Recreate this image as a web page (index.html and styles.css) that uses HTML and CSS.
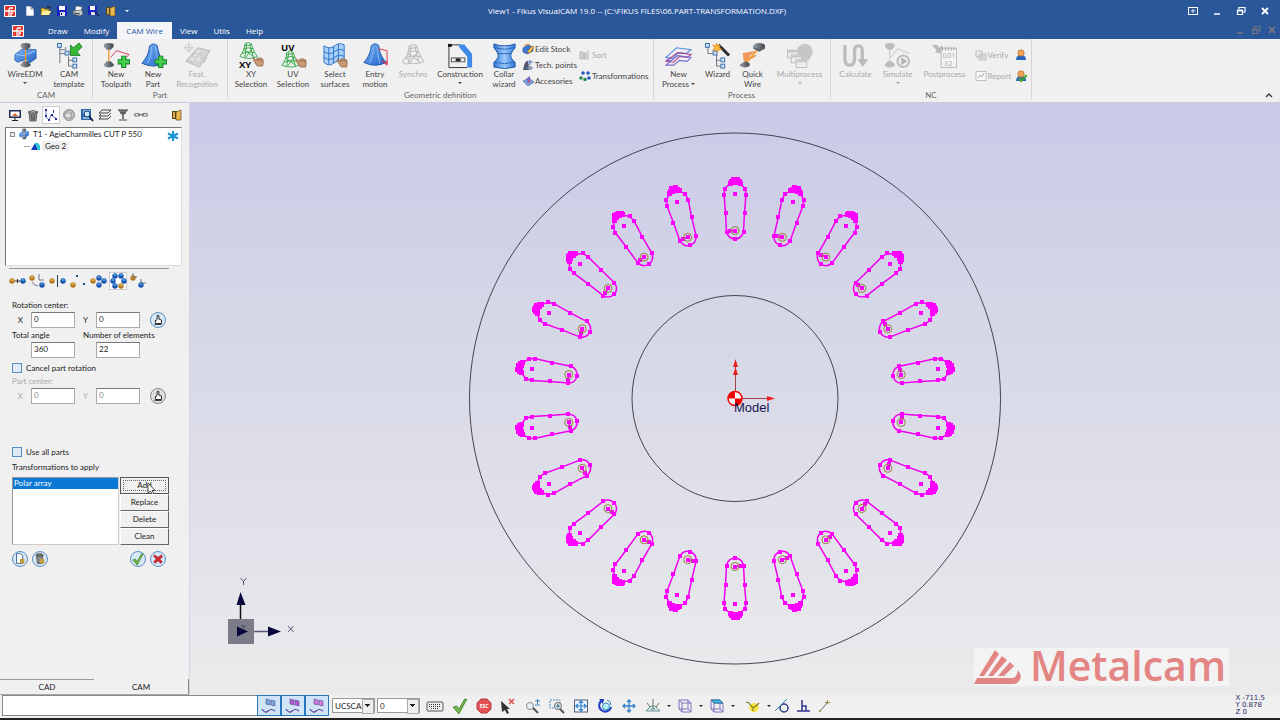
FILE: index.html
```html
<!DOCTYPE html>
<html lang="en">
<head>
<meta charset="utf-8">
<title>View1 - Fikus VisualCAM 19.0</title>
<link rel="stylesheet" href="styles.css">
</head>
<body>
<svg class="sprite" aria-hidden="true">
  <defs>
    <linearGradient id="blue" x1="0" x2="1" y1="0" y2="1"><stop offset="0" stop-color="#7db4f5"/><stop offset="1" stop-color="#1f63c8"/></linearGradient>
    <linearGradient id="steel" x1="0" x2="1"><stop offset="0" stop-color="#9aa0a8"/><stop offset="1" stop-color="#3f444b"/></linearGradient>
    <linearGradient id="waist" x1="0" x2="1"><stop offset="0" stop-color="#2f75d6"/><stop offset=".5" stop-color="#9cc9fb"/><stop offset="1" stop-color="#2f75d6"/></linearGradient>
  </defs>
  <symbol id="logo" viewBox="0 0 12 12"><rect width="12" height="12" rx="1" fill="#fff"/><rect x="1" y="1" width="10" height="10" fill="#e5352c"/><path d="M1 6h10M5 11V4.500q0-1.500 1.500-1.500H9M7 11V8h2" fill="none" stroke="#fff" stroke-width="1.300"/></symbol>
  <symbol id="hand" viewBox="0 0 12 12"><path d="M1 2.500 4 5 4.500 3l1.200-.5L7 3l1-.8 1.300 1 1.200.3.800 3-.8 4.500H5L3 8 .5 4z" fill="#c99a74" stroke="#80583b" stroke-width=".7"/><path d="M6 3.500v2M8 3.500v2M9.800 4v2" stroke="#80583b" stroke-width=".6"/></symbol>
  <symbol id="plus" viewBox="0 0 12 12"><path d="M4 .5h4V4h3.500v4H8v3.500H4V8H.5V4H4z" fill="#43d04b" stroke="#16852a"/></symbol>
  <symbol id="wire" viewBox="0 0 28 28"><path d="M3 13l8-6 14 1v9l-7 5-3-4-9 3-3-2z" fill="url(#blue)" stroke="#1a4f9e" stroke-width=".7"/><path d="M4 13l9 1 11-5M14 13v6" fill="none" stroke="#b9d8ff" stroke-width=".8"/><path d="M14 6v16" stroke="#f79a2c" stroke-width="1.300"/><path d="M9 2q5-2 10 0v3l-3 3h-4L9 5z" fill="url(#steel)"/><path d="M9 25q5 3 10 0v-2l-3-3h-4l-3 3z" fill="url(#steel)"/></symbol>
  <symbol id="template" viewBox="0 0 28 28"><path d="M4 5v17M4 8h6v-3M4 12h7M13 15v10h5M13 19h6" fill="none" stroke="#6b7480"/><g fill="#cfe5fb" stroke="#3a6ca8"><rect x="1.500" y="1.500" width="4" height="4"/><rect x="9.500" y="9.500" width="4" height="4"/><rect x="17.500" y="16.500" width="4" height="4"/><rect x="17.500" y="23" width="4" height="4"/></g><path d="m15 3 3 3 6-5 3 4-5 5 3 4H15z" fill="#37b834" stroke="#187321" stroke-width=".8"/></symbol>
  <symbol id="toolpath" viewBox="0 0 28 28"><path d="M6 7v15" stroke="#f79a2c" stroke-width="1.400"/><path d="M8 16 14 9l13 4-4 4" fill="none" stroke="#df3c63"/><path d="M1 2q5-2 10 0v3L8 8H4L1 5z" fill="url(#steel)"/><path d="M1 25q5 3 10 0v-2l-3-3H4l-3 3z" fill="url(#steel)"/><use href="#plus" x="15" y="14" width="13" height="13"/></symbol>
  <symbol id="bell" viewBox="0 0 28 28"><path d="M10 4Q14 0 18 4c1 8 3 12 8 18q-12 6-24 0C7 16 9 12 10 4z" fill="url(#blue)" stroke="#1b57ae"/><path d="M12 5c0 7-1 12-4 17M16 5l3 18" stroke="#89bdf8" fill="none"/></symbol>
  <symbol id="part" viewBox="0 0 28 28"><use href="#bell" width="28" height="28"/><use href="#plus" x="15" y="14" width="13" height="13"/></symbol>
  <symbol id="feature" viewBox="0 0 28 28"><path d="M2 20 14 6l13 3-11 17z" fill="#d2d2d2" stroke="#b9b9b9"/><path d="m6 18 9-10 8 2-9 12z" fill="#e2e2e2"/><g fill="none" stroke="#b9b9b9"><ellipse cx="12" cy="14" rx="3" ry="2"/><ellipse cx="18" cy="12" rx="2" ry="1.500"/><path d="m10 18 4 2M16 17l3-2M20 22l4-6"/><circle cx="5" cy="6" r="3.500" stroke-dasharray="2 1"/><path d="M5 1v10M0 6h10" stroke-dasharray="2 1"/></g></symbol>
  <symbol id="mesh" viewBox="0 0 20 18"><path d="M6 2q4-3 7 0c1 5 3 9 6 13q-9 4-18 0C4 11 6 7 6 2zM5 7q5-2 9 0M3 12q6-3 13-1M8 2 6 16M11 2l4 14M6 4l7-1M5 8l10 7M14 6 7 16" fill="none" stroke="currentColor" stroke-width=".9"/></symbol>
  <symbol id="surface" viewBox="0 0 28 28"><path d="M2 4q6 4 11 0t10-1v18q-6-3-11 1T2 21z" fill="#a8d0fa"/><path d="M2 4q6 4 11 0t10-1v18q-6-3-11 1T2 21zM7 6v17M12 4v18M17 2v18M2 10q6 4 11 0t10-1M2 16q6 4 11 0t10-1" fill="none" stroke="#2e72c5"/><use href="#hand" x="15" y="15" width="12" height="12"/></symbol>
  <symbol id="entry" viewBox="0 0 28 28"><use href="#bell" width="27" height="27"/><path d="m17 7 9 2v14l-6-4M22 21l4 3v-5" fill="none" stroke="#e0344c"/></symbol>
  <symbol id="synchro" viewBox="0 0 28 28"><use href="#mesh" x="2" y="1" width="24" height="24" color="#bcbcbc"/><circle cx="6" cy="20" r="3" fill="#eee" stroke="#bbb"/></symbol>
  <symbol id="construct" viewBox="0 0 28 28"><path d="M2 4v22.500h19M2 3h12" fill="none" stroke="#333"/><path d="M12 2.500h6l8 10v14h-5V15l-8-9z" fill="#3f8ae6"/><path d="M1 2h4v3H1z" fill="#111"/><rect x="4.500" y="16.500" width="14" height="4" fill="#eee" stroke="#555"/><path d="M9 17h5v3H9z" fill="#222"/></symbol>
  <symbol id="collar" viewBox="0 0 28 28"><path d="M3 2q11 4 22 0v4c-6 7-6 10 0 15v5q-11 3-22 0v-5c6-5 6-8 0-15z" fill="url(#waist)" stroke="#1d57aa"/><path d="M4 6q10 3 20 0M7 12h14M4 21q10 3 20 0" fill="none" stroke="#2d6ab8"/></symbol>
  <symbol id="stock" viewBox="0 0 12 12"><path d="m1 5 5-3 5 2v4l-6 3-4-2z" fill="#3b78d7" stroke="#23448a" stroke-width=".6"/><path d="m5 9 5-6 2 1-4 6z" fill="#f5c750" stroke="#8e5a25" stroke-width=".6"/><path d="m2 3 3-2 3 1" stroke="#e88a2a" fill="none"/></symbol>
  <symbol id="points" viewBox="0 0 12 12"><path d="M2 7q1-5 4-5l1 6 1 3H1z" fill="#4b5668"/><path d="M8 1v5M6 3h5M3 9h8" stroke="#5b81c0" stroke-width="1.200"/><circle cx="8" cy="9" r="2" fill="#8d99ac"/></symbol>
  <symbol id="accessory" viewBox="0 0 12 12"><path d="m1 6 6-3 5 4-6 4z" fill="#7aa4e6" stroke="#385d9c" stroke-width=".6"/><path d="m5 3 3-2v6L5 8z" fill="#7464c8"/><path d="m5 8 3-3 1 2z" fill="#e04d62"/></symbol>
  <symbol id="sort" viewBox="0 0 12 12"><path d="M1 3h3v7H1zM5 4h2v6H5zM9 1v10" fill="#d5d5d5" stroke="#b4b4b4"/></symbol>
  <symbol id="transform" viewBox="0 0 12 12"><g fill="#2456c4"><circle cx="4" cy="3" r="1.800"/><circle cx="9" cy="3" r="1.800"/><circle cx="10" cy="8" r="1.800"/></g><g fill="#258b4c"><circle cx="2" cy="8" r="1.800"/><circle cx="6" cy="9.500" r="1.800"/></g></symbol>
  <symbol id="process" viewBox="0 0 28 28"><g fill="none" stroke-width="1.200"><path d="m1 16 11-10 15 2-5 4-8-1-6 6zM1 19l6 0" stroke="#5b8ee0"/><path d="m1 20 12-9 14 2-4 3-8-1-6 6z" stroke="#b04596"/><path d="m1 24 12-10 14 2-4 4-8-1-6 5z" stroke="#7a6dcf"/></g></symbol>
  <symbol id="wizard" viewBox="0 0 28 28"><path d="M4 5v7h7M13 13v12h5M13 19h5" fill="none" stroke="#6b7480"/><g fill="#cfe5fb" stroke="#3a6ca8"><rect x="1.500" y="1.500" width="4" height="4"/><rect x="9.500" y="9.500" width="4" height="4"/><rect x="17.500" y="16.500" width="4" height="4"/><rect x="17.500" y="23" width="4" height="4"/></g><path d="m15 3 11 11" stroke="#2d2d35" stroke-width="3"/><path d="m13 1 1 3 3-1-1 3 3 2-4 0-1 3-1-3-4 1 2-3-2-3 3 1z" fill="#fcbc2e" stroke="#d8781b" stroke-width=".6"/></symbol>
  <symbol id="quick" viewBox="0 0 28 28"><path d="m4 12 12-2-8 6 10-2-13 8" fill="#f2995b" stroke="#dc6d31" stroke-width=".6"/><path d="M21 6 7 22" stroke="#f7a53b" stroke-width="2"/><path d="M15 4v3l6 3 6-3V4" fill="#59616b"/><ellipse cx="21" cy="4" rx="6" ry="3" fill="url(#steel)"/><path d="M1 23v2q5 3 10 0v-3l-4-2z" fill="url(#steel)"/></symbol>
  <symbol id="multi" viewBox="0 0 28 28"><path d="M12 6q8-8 14-1l2 6-4 8H14z" fill="#c6c6c6"/><g fill="#ededed" stroke="#bdbdbd"><rect x="1.500" y="8.500" width="11" height="8"/><rect x="5.500" y="13.500" width="11" height="8"/><rect x="10.500" y="18.500" width="11" height="8"/></g><path d="M2 9h10v2H2zM6 14h10v2H6zM11 19h10v2H11z" fill="#c6c6c6"/></symbol>
  <symbol id="calculate" viewBox="0 0 28 28"><path d="M3 3v14q0 7 5 7t5-7V9q0-5 4-5t4 5v12" fill="none" stroke="#bdbdbd" stroke-width="3.500"/><path d="M16 18h11l-5.500 8z" fill="#b9b9b9"/></symbol>
  <symbol id="simulate" viewBox="0 0 28 28"><path d="M6 7v15" stroke="#c3c3c3"/><path d="M7 16 14 7l13 5" fill="none" stroke="#c3c3c3"/><path d="M1 2q5-2 10 0v3L8 8H4L1 5zM1 25q5 3 10 0v-2l-3-3H4l-3 3z" fill="#bcbcbc"/><circle cx="20" cy="20" r="6" fill="#eee" stroke="#bcbcbc" stroke-width="2"/><path d="m18 16 6 4-6 4z" fill="#b2b2b2"/></symbol>
  <symbol id="post" viewBox="0 0 28 28"><path d="m1 3 5 0 3 3 2-3 2 9-9-1 2-2z" fill="#b9b9b9"/><rect x="10.500" y="6.500" width="16" height="20" fill="#f3f3f3" stroke="#bbb"/><path d="M12 5v4M15 5v4M18 5v4M21 5v4M24 5v4" stroke="#aaa"/></symbol>
  <symbol id="verify" viewBox="0 0 12 12"><path d="M1 2h6v6H1zM4 5h7v6H4zM5 7h5M5 9h5" fill="#eee" stroke="#bdbdbd"/></symbol>
  <symbol id="report" viewBox="0 0 12 12"><rect x="1" y="1.500" width="10" height="9" fill="#f8f8f8" stroke="#bdbdbd"/><path d="m3 8 2-3 2 2 2-4" fill="none" stroke="#aaa"/></symbol>
  <symbol id="person" viewBox="0 0 12 12"><path d="M1 11q0-5 5-5t5 5z" fill="#2766bd"/><circle cx="6" cy="4" r="3.200" fill="#f2a456" stroke="#a96021" stroke-width=".6"/></symbol>
  <symbol id="person-ok" viewBox="0 0 12 12"><use href="#person" width="12" height="12"/><path d="m4 8 2 3 6-6" fill="none" stroke="#41a431" stroke-width="2"/></symbol>
  <symbol id="page" viewBox="0 0 12 12"><path d="M2 1h5l3 3v7H2z" fill="#fff" stroke="#35538b" stroke-width=".6"/><path d="M7 1v3h3" fill="none" stroke="#555" stroke-width=".8"/></symbol>
  <symbol id="folder" viewBox="0 0 12 12"><path d="M1 10V3h3l1 1h4v2h2l-2 4z" fill="#e8bd3e" stroke="#5a4708" stroke-width=".7"/><path d="M3 6h8l-2 4H1z" fill="#fff1a1"/><path d="M7 2q3-1 4 1" stroke="#111" fill="none"/></symbol>
  <symbol id="disk" viewBox="0 0 12 12"><path d="M1 1h10v10H1z" fill="#1c23c0"/><path d="M3 1h6v4H3z" fill="#fff"/><path d="M4 7h5v4H4z" fill="#dfe3ee"/><path d="M5 8h1v2H5z" fill="#111"/></symbol>
  <symbol id="disk-as" viewBox="0 0 12 12"><path d="M0 1h9v9H0z" fill="#1c23c0"/><path d="M2 1h5v4H2z" fill="#fff"/><path d="M3 7h4v3H3z" fill="#dfe3ee"/><path d="m7 7 4 4" stroke="#1b2352" stroke-width="1.400"/></symbol>
  <symbol id="printer" viewBox="0 0 12 12"><path d="m4 1 6 1-1 5H3z" fill="#fff" stroke="#666" stroke-width=".5"/><path d="m1 6 9-1 1 4-3 2-7-2z" fill="#c6cbd2" stroke="#444" stroke-width=".6"/><path d="m2 8 6 1" stroke="#333"/></symbol>
  <symbol id="door" viewBox="0 0 12 12"><path d="M2 2h5v8H2z" fill="#5b461c"/><path d="m6 3 5-2v10H6z" fill="#eabb4c" stroke="#5b461c" stroke-width=".7"/><path d="M3 3h2v6H3z" fill="#d6aa4c"/></symbol>
  <symbol id="screen" viewBox="0 0 14 14"><path d="M1 2h12v8H1z" fill="#222c55"/><path d="M2.500 3.500h9v5h-9z" fill="#fff"/><path d="m4 8 3-3 3 3z" fill="#d9622e"/><path d="M7 9v4M4 12.500h6" stroke="#222"/></symbol>
  <symbol id="bin" viewBox="0 0 14 14"><path d="m3 4 1 9h6l1-9z" fill="#999" stroke="#444" stroke-width=".8"/><path d="M2 4q5-3 10 0l-3 1H4zM5 6l1 6M7 6v6M9 6l-1 6" fill="#bbb" stroke="#444" stroke-width=".8"/></symbol>
  <symbol id="path" viewBox="0 0 14 14"><path d="M2 1v8l3 3 2-5 3 2 3 2" fill="none" stroke="#3950b0" stroke-width=".8"/><path d="M1 1h2v2H1zM1 7h2v2H1zM4 11h2v2H4zM7 6h2v2H7zM11 10h2v2h-2zM9 2h1v3H9z" fill="#242e91"/></symbol>
  <symbol id="cube-gray" viewBox="0 0 14 14"><circle cx="7" cy="7" r="5.500" fill="#bbb" stroke="#999"/><path d="M3 5h6v5H3zM3 5l2-2h6L9 5M9 10l3-2V4" fill="#ddd" stroke="#888" stroke-width=".7"/></symbol>
  <symbol id="find" viewBox="0 0 14 14"><path d="M1 1h10v11H1z" fill="#2d68ae"/><path d="M3 3h7M3 10h6M3 5h2" stroke="#fff"/><circle cx="7" cy="6" r="3" fill="#c9e9fb" stroke="#123b75"/><path d="m9 8 4 5" stroke="#172b51" stroke-width="2"/></symbol>
  <symbol id="layers" viewBox="0 0 14 14"><path d="M1 5 4 2h9l-3 3zM1 8l2-2M1 8h9l3-3M1 11l2-2M1 11h9l3-3" fill="none" stroke="#444"/></symbol>
  <symbol id="funnel" viewBox="0 0 14 14"><path d="M2 2h10L8 7v4H6V7z" fill="#777"/><path d="M2 2h10M4 5h6M3 12h8" stroke="#444"/></symbol>
  <symbol id="chain" viewBox="0 0 14 14"><g fill="none" stroke="#777" stroke-width="1.200"><rect x=".6" y="5.500" width="5" height="2.500" rx="1"/><rect x="8.400" y="5.500" width="5" height="2.500" rx="1"/><path d="M4 6.700h6"/></g></symbol>
  <symbol id="gold" viewBox="0 0 6 6"><circle cx="3" cy="3" r="2.700" fill="#b67a20"/><path d="m1 2 2-1 2 1-2 1z" fill="#eabf68"/></symbol>
  <symbol id="azure" viewBox="0 0 6 6"><circle cx="3" cy="3" r="2.700" fill="#1953ad"/><path d="m1 2 2-1 2 1-2 1z" fill="#54b2f2"/></symbol>
  <symbol id="t-move" viewBox="0 0 18 18"><use href="#gold" x="0" y="6" width="6" height="6"/><use href="#azure" x="11" y="6" width="6" height="6"/><path d="M6 9h5M8.500 7v4" stroke="#333"/></symbol>
  <symbol id="t-rotate" viewBox="0 0 18 18"><use href="#gold" x="0" y="3" width="6" height="6"/><use href="#azure" x="10" y="10" width="6" height="6"/><path d="M3 10q2 4 6 4M10 2v6h5" fill="none" stroke="#557" stroke-width=".8"/></symbol>
  <symbol id="t-mirror" viewBox="0 0 18 18"><use href="#gold" x="0" y="6" width="6" height="6"/><use href="#azure" x="11" y="6" width="6" height="6"/><path d="M8.500 3v12" stroke="#263a62"/></symbol>
  <symbol id="t-scale" viewBox="0 0 18 18"><use href="#gold" x="1" y="10" width="6" height="6"/><path d="M7 3h2v2H7zM14 11h2v2h-2z" fill="#224b76"/></symbol>
  <symbol id="t-grid" viewBox="0 0 18 18"><use href="#gold" x="1" y="6" width="6" height="6"/><use href="#azure" x="7" y="3" width="6" height="6"/><use href="#azure" x="7" y="10" width="6" height="6"/><use href="#azure" x="12" y="6" width="6" height="6"/></symbol>
  <symbol id="t-polar" viewBox="0 0 18 18"><use href="#azure" x="3" y="1" width="6" height="6"/><use href="#azure" x="9" y="1" width="6" height="6"/><use href="#azure" x="1" y="6" width="6" height="6"/><use href="#azure" x="12" y="6" width="6" height="6"/><use href="#azure" x="3" y="11" width="6" height="6"/><use href="#gold" x="9" y="11" width="6" height="6"/></symbol>
  <symbol id="t-copy" viewBox="0 0 18 18"><use href="#gold" x="1" y="3" width="6" height="6"/><use href="#azure" x="9" y="10" width="6" height="6"/><path d="M4 1v4h4M12 7v4h5" fill="none" stroke="#456" stroke-width=".8"/></symbol>
  <symbol id="pick" viewBox="0 0 16 16"><path d="m5 11 0-2 2-2V3q1-1 2 0v4l3 1v4H5zM6 8l-1 2M4 13h8" fill="#fff" stroke="#222" stroke-width="1.100"/></symbol>
  <symbol id="check" viewBox="0 0 16 16"><path d="m2 9 3-1 2 3 5-9 2 0-7 13z" fill="#76b944" stroke="#367724" stroke-width=".7"/></symbol>
  <symbol id="cross" viewBox="0 0 16 16"><path d="m4 3 4 3 4-3 1 3-3 2 3 3-2 2-3-3-3 3-2-2 3-3-3-3z" fill="#d82532" stroke="#841824" stroke-width=".6"/></symbol>
  <symbol id="new-doc" viewBox="0 0 16 16"><path d="M4 2h5l2 2v9H4z" fill="#fff" stroke="#335b89"/><path d="M8 8h5v5H8z" fill="#c39a35"/></symbol>
  <symbol id="bin-lock" viewBox="0 0 16 16"><path d="M4 5h7v8H5zM3 4h9l-2-2H5z" fill="#8b8c86" stroke="#54554f"/><path d="M8 8h5v5H8z" fill="#c9a13d"/></symbol>
  <symbol id="geo" viewBox="0 0 10 10"><path d="M0 9 4 2l3 7z" fill="#123ac0"/><path d="M4 2h3q3 3 2 7H7z" fill="#21c8d7"/></symbol>
  <symbol id="filter-view" viewBox="0 0 16 16"><path d="m5 1 4 1v5L5 6zM10 2l4 1v5l-4-1z" fill="currentColor" stroke="#574e8b" stroke-width=".6"/><path d="M1 11q3 5 6 2t7 0" fill="none" stroke="#51409a" stroke-width="1.200"/></symbol>
  <symbol id="keyboard" viewBox="0 0 18 16"><rect x="1" y="4" width="16" height="9" rx="1" fill="#eee" stroke="#555"/><path d="M3 6.500h12M3 8.500h12M5 10.500h8" stroke="#333" stroke-dasharray="1 1"/></symbol>
  <symbol id="unselect" viewBox="0 0 16 16"><path d="m2 3 9 8H8l2 4-2 1-2-4-3 2z" fill="#333"/><path d="m10 1 5 5M15 1l-5 5" stroke="#e04d4d" stroke-width="1.500"/></symbol>
  <symbol id="zoom-pm" viewBox="0 0 16 16"><circle cx="5" cy="8" r="3.500" fill="#e9f3f9" stroke="#888"/><path d="m8 10 5 5" stroke="#555" stroke-width="2"/><path d="M10 3h5M12.500 1v5M10 7h5" stroke="#3786c7"/></symbol>
  <symbol id="zoom-win" viewBox="0 0 16 16"><path d="M1 2h10v8H1z" fill="none" stroke="#4b8bbf" stroke-dasharray="2 1"/><circle cx="9" cy="8" r="3.500" fill="#e2f0f8" stroke="#666"/><path d="m11 11 4 4" stroke="#555" stroke-width="2"/><path d="M7 8h4M9 6v4" stroke="#367"/></symbol>
  <symbol id="fit" viewBox="0 0 16 16"><rect x="1.500" y="2" width="13" height="12" fill="#eef7ff" stroke="#555b76"/><path d="M8 2v12M2 8h12M6 5l2-2 2 2M6 11l2 2 2-2M5 6 3 8l2 2M11 6l2 2-2 2" fill="none" stroke="#2d82cf" stroke-width="1.200"/></symbol>
  <symbol id="orbit" viewBox="0 0 16 16"><path d="M6 2a6 6 0 1 0 8 7" fill="none" stroke="#233ac2" stroke-width="2"/><circle cx="9" cy="8.500" r="3.500" fill="#b6eef5" stroke="#3187b4"/><path d="m2 1 5 0-1 5z" fill="#233ac2"/><path d="M10 2q4 1 4 5" fill="none" stroke="#2785bc"/></symbol>
  <symbol id="pan" viewBox="0 0 16 16"><path d="M8 2v12M2 8h12M6 4l2-2 2 2M6 12l2 2 2-2M4 6 2 8l2 2M12 6l2 2-2 2" fill="none" stroke="#3182c7" stroke-width="1.300"/></symbol>
  <symbol id="plane" viewBox="0 0 16 16"><path d="m1 13 5-5h4l5 5z" fill="#c9ecea" stroke="#6d9397"/><path d="M8 1v9M2 5l3 4M14 5l-3 4M6 11h4" stroke="#6d7366"/></symbol>
  <symbol id="wirecube" viewBox="0 0 16 16"><path d="M2 2h9l3 3v9H5l-3-3zM2 2l3 3h9M5 5v9M2 11h9V2M11 11l3 3" fill="none" stroke="#7560b6" stroke-width=".9"/></symbol>
  <symbol id="topcube" viewBox="0 0 16 16"><use href="#wirecube" width="16" height="16"/><path d="M2 2h9l3 3H5z" fill="#48bfe8" stroke="#226d9b"/></symbol>
  <symbol id="snap" viewBox="0 0 16 16"><path d="M4 9q5-8 10 0-1 5-5 5t-5-5z" fill="#f6e33d"/><path d="m1 4 3 1 3 4h3l4-4M8 9v4" fill="none" stroke="#7a7224" stroke-width="1.100"/></symbol>
  <symbol id="tangent" viewBox="0 0 16 16"><circle cx="10" cy="10" r="4" fill="none" stroke="#2f3b86" stroke-width="1.500"/><path d="M1 13 13 1" stroke="#3586af"/></symbol>
  <symbol id="perp" viewBox="0 0 16 16"><path d="M2 13h13M7 2v11M7 8h4v5" fill="none" stroke="#30348a" stroke-width="1.500"/></symbol>
  <symbol id="endline" viewBox="0 0 16 16"><path d="M4 13 12 4" stroke="#666"/><path d="M3 12h2v2H3zM11 2h1v4h-1zM9 4h5v1H9z" fill="#9d9551"/></symbol>
  <symbol id="restore" viewBox="0 0 10 10"><path d="M3 3V1.500h6V6H7M1.500 4h5v4.500h-5zM1.500 5h5" fill="none" stroke="currentColor" stroke-width="1.200"/></symbol>
  <symbol id="minimise" viewBox="0 0 10 10"><path d="M2 8h6" stroke="currentColor" stroke-width="1.500"/></symbol>
  <symbol id="close" viewBox="0 0 10 10"><path d="m2 2 6 6M8 2 2 8" stroke="currentColor" stroke-width="1.800"/></symbol>
  <symbol id="ribbon-toggle" viewBox="0 0 10 10"><rect x=".5" y="1.500" width="9" height="7" fill="none" stroke="currentColor"/><path d="M5 7V4M3 5.500 5 3.500l2 2" fill="none" stroke="currentColor"/></symbol>
</svg>

<div class="app">
  <header class="titlebar">
    <div class="quick">
      <svg class="i12"><use href="#logo"/></svg>
      <button class="flat first" aria-label="New"><svg class="i12"><use href="#page"/></svg></button>
      <button class="flat" aria-label="Open"><svg class="i12"><use href="#folder"/></svg></button>
      <button class="flat" aria-label="Save"><svg class="i12"><use href="#disk"/></svg></button>
      <button class="flat" aria-label="Print"><svg class="i12"><use href="#printer"/></svg></button>
      <button class="flat" aria-label="Save as"><svg class="i12"><use href="#disk-as"/></svg></button>
      <button class="flat" aria-label="Exit"><svg class="i12"><use href="#door"/></svg></button>
      <button class="flat more" aria-label="Customise"><span class="caret"></span></button>
    </div>
    <h1>View1 - Fikus VisualCAM 19.0 -- (C:\FIKUS FILES\06.PART-TRANSFORMATION.DXF)</h1>
    <div class="winctl">
      <button class="flat" aria-label="Ribbon display"><svg class="i10"><use href="#ribbon-toggle"/></svg></button>
      <button class="flat" aria-label="Minimise"><svg class="i10"><use href="#minimise"/></svg></button>
      <button class="flat" aria-label="Restore"><svg class="i10"><use href="#restore"/></svg></button>
      <button class="flat" aria-label="Close"><svg class="i10"><use href="#close"/></svg></button>
    </div>
  </header>

  <nav class="tabs">
    <svg class="i12"><use href="#logo"/></svg>
    <button class="tab first">Draw</button>
    <button class="tab">Modify</button>
    <button class="tab active">CAM Wire</button>
    <button class="tab">View</button>
    <button class="tab">Utils</button>
    <button class="tab">Help</button>
    <div class="docctl">
      <button class="flat" aria-label="Minimise view"><svg class="i10"><use href="#minimise"/></svg></button>
      <button class="flat" aria-label="Restore view"><svg class="i10"><use href="#restore"/></svg></button>
      <button class="flat" aria-label="Close view"><svg class="i10"><use href="#close"/></svg></button>
    </div>
  </nav>

  <section class="ribbon">
    <div class="group">
      <div class="tools">
        <button class="tool w46"><svg><use href="#wire"/></svg><span>WireEDM</span><i class="caret"></i></button>
        <button class="tool w42"><svg><use href="#template"/></svg><span>CAM<br>template</span></button>
      </div>
      <h2>CAM</h2>
    </div>
    <div class="group">
      <div class="tools">
        <button class="tool w42"><svg><use href="#toolpath"/></svg><span>New<br>Toolpath</span></button>
        <button class="tool w32"><svg><use href="#part"/></svg><span>New<br>Part</span></button>
        <button class="tool w56" disabled><svg><use href="#feature"/></svg><span>Feat.<br>Recognition</span></button>
      </div>
      <h2>Part</h2>
    </div>
    <div class="group">
      <div class="tools">
        <button class="tool w42"><svg viewBox="0 0 28 28"><use href="#mesh" x="1" y="0" width="20" height="18" color="#26a33b"/><text class="icon-word" x="1" y="27">XY</text><use href="#hand" x="15" y="14" width="12" height="12"/></svg><span>XY<br>Selection</span></button>
        <button class="tool w42"><svg viewBox="0 0 28 28"><use href="#mesh" x="1" y="9" width="20" height="18" color="#26a33b"/><text class="icon-word" x="1" y="9">UV</text><use href="#hand" x="16" y="15" width="12" height="12"/></svg><span>UV<br>Selection</span></button>
        <button class="tool w42"><svg><use href="#surface"/></svg><span>Select<br>surfaces</span></button>
        <button class="tool w38"><svg><use href="#entry"/></svg><span>Entry<br>motion</span></button>
        <button class="tool w38" disabled><svg><use href="#synchro"/></svg><span>Synchro</span></button>
        <button class="tool w56"><svg><use href="#construct"/></svg><span>Construction</span><i class="caret"></i></button>
        <button class="tool w32"><svg><use href="#collar"/></svg><span>Collar<br>wizard</span></button>
        <div class="stack">
          <button class="mini"><svg class="i12"><use href="#stock"/></svg>Edit Stock</button>
          <button class="mini"><svg class="i12"><use href="#points"/></svg>Tech. points</button>
          <button class="mini"><svg class="i12"><use href="#accessory"/></svg>Accesories</button>
        </div>
        <div class="stack two">
          <button class="mini" disabled><svg class="i12"><use href="#sort"/></svg>Sort</button>
          <button class="mini"><svg class="i12"><use href="#transform"/></svg>Transformations</button>
        </div>
      </div>
      <h2>Geometric definition</h2>
    </div>
    <div class="group">
      <div class="tools">
        <button class="tool w46"><svg><use href="#process"/></svg><span>New<br>Process <i class="caret"></i></span></button>
        <button class="tool w32"><svg><use href="#wizard"/></svg><span>Wizard</span></button>
        <button class="tool w38"><svg><use href="#quick"/></svg><span>Quick<br>Wire</span></button>
        <button class="tool w56" disabled><svg><use href="#multi"/></svg><span>Multiprocess</span><i class="caret"></i></button>
      </div>
      <h2>Process</h2>
    </div>
    <div class="group">
      <div class="tools">
        <button class="tool w46" disabled><svg><use href="#calculate"/></svg><span>Calculate</span></button>
        <button class="tool w38" disabled><svg><use href="#simulate"/></svg><span>Simulate</span><i class="caret"></i></button>
        <button class="tool w56" disabled><svg viewBox="0 0 28 28"><use href="#post"/><text class="nc-code" x="12" y="17">G01</text><text class="nc-code" x="14" y="25">X2</text></svg><span>Postprocess</span></button>
        <div class="stack two">
          <button class="mini" disabled><svg class="i12"><use href="#verify"/></svg>Verify</button>
          <button class="mini" disabled><svg class="i12"><use href="#report"/></svg>Report</button>
        </div>
        <div class="stack two">
          <button class="mini" aria-label="Operator"><svg class="i12"><use href="#person"/></svg></button>
          <button class="mini" aria-label="Validated operator"><svg class="i12"><use href="#person-ok"/></svg></button>
        </div>
      </div>
      <h2>NC</h2>
    </div>
    <button class="flat collapse" aria-label="Collapse ribbon"><svg class="i10" viewBox="0 0 10 10"><path d="m2 7 3-3 3 3" fill="none" stroke="#333" stroke-width="1.300"/></svg></button>
  </section>

  <main class="work">
    <aside class="panel">
      <div class="bar">
        <button class="flat" aria-label="Display"><svg class="i14"><use href="#screen"/></svg></button>
        <button class="flat" aria-label="Delete item"><svg class="i14"><use href="#bin"/></svg></button>
        <button class="flat on" aria-label="Toolpaths"><svg class="i14"><use href="#path"/></svg></button>
        <button class="flat" aria-label="Solid" disabled><svg class="i14"><use href="#cube-gray"/></svg></button>
        <button class="flat" aria-label="Find"><svg class="i14"><use href="#find"/></svg></button>
        <button class="flat" aria-label="Layers"><svg class="i14"><use href="#layers"/></svg></button>
        <button class="flat" aria-label="Filter"><svg class="i14"><use href="#funnel"/></svg></button>
        <button class="flat" aria-label="Link"><svg class="i14"><use href="#chain"/></svg></button>
        <button class="flat last" aria-label="Close panel"><svg class="i12"><use href="#door"/></svg></button>
      </div>
      <div class="tree">
        <div class="node"><span class="toggle"></span><svg class="i12"><use href="#wire"/></svg>T1 - AgieCharmilles CUT P 550</div>
        <div class="node child"><span class="branch"></span><svg class="i10"><use href="#geo"/></svg><span class="chosen">Geo 2</span></div>
        <svg class="star" viewBox="0 0 12 12"><path d="M6 1v10M1 3.500l10 5M11 3.500l-10 5" stroke="#1d94d6" stroke-width="2.200"/></svg>
      </div>
      <div class="bar kinds">
        <button class="flat" aria-label="Translate"><svg class="i18"><use href="#t-move"/></svg></button>
        <button class="flat" aria-label="Rotate"><svg class="i18"><use href="#t-rotate"/></svg></button>
        <button class="flat" aria-label="Mirror"><svg class="i18"><use href="#t-mirror"/></svg></button>
        <button class="flat" aria-label="Scale"><svg class="i18"><use href="#t-scale"/></svg></button>
        <button class="flat" aria-label="Grid array"><svg class="i18"><use href="#t-grid"/></svg></button>
        <button class="flat on" aria-label="Polar array"><svg class="i18"><use href="#t-polar"/></svg></button>
        <button class="flat" aria-label="Origin to origin"><svg class="i18"><use href="#t-copy"/></svg></button>
      </div>
      <form class="form">
        <div class="fields">
          <span class="wide">Rotation center:</span>
          <label class="axis" for="rx">X</label><input id="rx" type="text" value="0">
          <label class="axis" for="ry">Y</label><input id="ry" type="text" value="0">
          <button type="button" class="round" aria-label="Pick rotation center"><svg><use href="#pick"/></svg></button>
          <label class="half" for="angle">Total angle</label><label class="rest" for="count">Number of elements</label>
          <input class="c2" id="angle" type="text" value="360"><input class="c4" id="count" type="text" value="22">
        </div>
        <label class="tick"><input type="checkbox">Cancel part rotation</label>
        <div class="fields dim">
          <span class="wide">Part center:</span>
          <label class="axis" for="px">X</label><input id="px" type="text" value="0" disabled>
          <label class="axis" for="py">Y</label><input id="py" type="text" value="0" disabled>
          <button type="button" class="round gray" aria-label="Pick part center"><svg><use href="#pick"/></svg></button>
        </div>
        <label class="tick all"><input type="checkbox">Use all parts</label>
        <label class="caption" for="list">Transformations to apply</label>
        <div class="apply">
          <select class="list" id="list" size="4"><option selected>Polar array</option></select>
          <div class="acts">
            <button type="button" class="push focus">Add<svg class="cursor" viewBox="0 0 10 14"><path d="M1 1v10l2.500-2 2 4 1.500-1-2-3.500h3z" fill="#fff" stroke="#222" stroke-width=".8"/></svg></button>
            <button type="button" class="push">Replace</button>
            <button type="button" class="push">Delete</button>
            <button type="button" class="push">Clean</button>
          </div>
        </div>
        <div class="ends">
          <button type="button" class="round" aria-label="Load"><svg><use href="#new-doc"/></svg></button>
          <button type="button" class="round" aria-label="Discard"><svg><use href="#bin-lock"/></svg></button>
          <button type="button" class="round push-right" aria-label="Accept"><svg><use href="#check"/></svg></button>
          <button type="button" class="round" aria-label="Cancel"><svg><use href="#cross"/></svg></button>
        </div>
      </form>
      <div class="sheets"><button class="sheet">CAD</button><button class="sheet current">CAM</button></div>
    </aside>

    <section class="view">
      <svg class="drawing" viewBox="190 103 1090 592">
        <g fill="none" stroke="#33333f" stroke-width=".9"><circle cx="735" cy="398.500" r="265.500"/><circle cx="735" cy="398.500" r="103"/></g>
        <g id="slots"></g>
        <g class="origin">
          <path d="M735.500 392V362M742 398.500h30" stroke="#a04444"/>
          <path d="m735.500 359 2.500 8h-5zM735.500 367l2.500 8h-5zM775 398.500l-8-2.500v5z" fill="#f02020"/>
          <circle cx="735" cy="398.500" r="7" fill="#fff" stroke="#f00000" stroke-width="1.500"/>
          <path d="M735 398.500v-7a7 7 0 0 0-7 7zM735 398.500v7a7 7 0 0 0 7-7z" fill="#f00000"/>
          <text class="model" x="734" y="412">Model</text>
        </g>
        <g class="triad">
          <rect x="228" y="619" width="26" height="25" fill="#7c7b88"/>
          <path d="M240.500 619v-14" stroke="#111" stroke-width="1.500"/><path d="M254 631.500h16" stroke="#55557a" stroke-width="1.500"/>
          <path d="m240.500 592 5 13h-9zM281 631.500l-13-5v10zM248 631.500l-11-5v10z" fill="#07073d"/>
          <g fill="none" stroke="#34345c" stroke-width=".8"><path d="m240.500 578 3 3.500 3-3.500M243.500 581.500v3.500M288 626l5.500 6M293.500 626l-5.500 6M241 626h4l-4 5"/></g>
        </g>
      </svg>
      <div class="brand">
        <svg viewBox="0 0 48 36"><g fill="#e28583"><path d="M21 1 5 27h5L25 5zM28 7 14 27h5L33 11zM36 13 24 27h6l10-10zM3 29h36q3-1 4-4l1-4q5 7 1 11-2 3-7 3H0z"/></g></svg>
        <span>Metalcam</span>
      </div>
    </section>
  </main>

  <footer class="status">
    <input class="prompt" type="text" aria-label="Command">
    <div class="switches">
      <button class="switch sky" aria-label="Point filter"><svg class="i16"><use href="#filter-view"/></svg></button>
      <button class="switch violet" aria-label="Curve filter"><svg class="i16"><use href="#filter-view"/></svg></button>
      <button class="switch pink" aria-label="Surface filter"><svg class="i16"><use href="#filter-view"/></svg></button>
    </div>
    <span class="drop"><select aria-label="Coordinate system"><option>UCSCAM</option></select></span>
    <span class="drop"><select aria-label="Level"><option>0</option></select></span>
    <div class="icons">
      <button class="flat" aria-label="Keyboard"><svg class="i18"><use href="#keyboard"/></svg></button>
      <button class="flat" aria-label="Confirm"><svg class="i18"><use href="#check"/></svg></button>
      <button class="flat" aria-label="Escape"><svg class="i16" viewBox="0 0 16 16"><path d="M5 1h6l4 4v6l-4 4H5l-4-4V5z" fill="#e35252" stroke="#b53c3c"/><text class="esc-word" x="8" y="10">ESC</text></svg></button>
      <button class="flat" aria-label="Deselect"><svg class="i16"><use href="#unselect"/></svg></button>
    </div>
    <div class="icons zooms">
      <button class="flat" aria-label="Zoom"><svg class="i16"><use href="#zoom-pm"/></svg></button>
      <button class="flat" aria-label="Zoom window"><svg class="i16"><use href="#zoom-win"/></svg></button>
      <button class="flat" aria-label="Fit"><svg class="i16"><use href="#fit"/></svg></button>
      <button class="flat" aria-label="Orbit"><svg class="i16"><use href="#orbit"/></svg></button>
      <button class="flat" aria-label="Pan"><svg class="i16"><use href="#pan"/></svg></button>
      <button class="flat menu" aria-label="Work plane"><svg class="i16"><use href="#plane"/></svg><i class="caret"></i></button>
      <button class="flat menu" aria-label="Wireframe"><svg class="i16"><use href="#wirecube"/></svg><i class="caret"></i></button>
      <button class="flat menu" aria-label="Top view"><svg class="i16"><use href="#topcube"/></svg><i class="caret"></i></button>
    </div>
    <div class="icons snaps">
      <button class="flat menu" aria-label="Snap"><svg class="i16"><use href="#snap"/></svg><i class="caret"></i></button>
      <button class="flat" aria-label="Tangent"><svg class="i16"><use href="#tangent"/></svg></button>
      <button class="flat" aria-label="Perpendicular"><svg class="i16"><use href="#perp"/></svg></button>
      <button class="flat" aria-label="End point"><svg class="i16"><use href="#endline"/></svg></button>
    </div>
    <output class="coords">X -711.5<br>Y 0.878<br>Z 0</output>
  </footer>
</div>
<script src="script.js"></script>
</body>
</html>
```

FILE: styles.css
```css
* { box-sizing: border-box; }
body { margin: 0; font: 8px/10px Lato, "Open Sans", sans-serif; color: #222; }
button, input, select { font: inherit; color: inherit; margin: 0; padding: 0; border: 0; border-radius: 0; }
button { background: none; }
h1, h2 { margin: 0; padding: 0; font: inherit; }
svg { display: block; flex: none; }
.sprite { position: absolute; width: 0; height: 0; }
.i10 { width: 10px; height: 10px; }
.i12 { width: 12px; height: 12px; }
.i14 { width: 14px; height: 14px; }
.i16 { width: 16px; height: 16px; }
.i18 { width: 18px; height: 18px; }
.flat { display: flex; align-items: center; justify-content: center; }
.caret { display: inline-block; border: 2px solid transparent; border-top-color: currentColor; border-bottom: 0; }

.app { display: flex; flex-direction: column; min-height: 100vh; background: #f0f0f0; }

.titlebar { display: grid; grid-template-columns: 1fr auto 1fr; align-items: center; height: 22px; padding: 0 10px 0 4px; background: #2a569a; color: #fff; font-family: "Open Sans", sans-serif; }
.quick { display: flex; align-items: center; gap: 4px; }
.quick .first { margin-left: 4px; }
.quick .more { margin-left: 5px; }
.winctl { display: flex; justify-content: flex-end; gap: 14px; }

.tabs { display: flex; align-items: flex-end; height: 17px; padding: 0 3px 0 12px; background: #2a569a; color: #fff; font-family: "Open Sans", sans-serif; }
.tabs > svg { align-self: center; }
.tab { height: 17px; padding: 0 8px; }
.tab.first { margin-left: 16px; }
.tab.active { padding: 0 9px; background: #f3f5f9; color: #2a569a; }
.docctl { display: flex; gap: 6px; margin: 0 0 4px auto; color: #707782; }

.ribbon { display: flex; height: 64px; background: #f0f0f0; border-bottom: 1px solid #c9cbdc; color: #444; }
.group { display: flex; flex-direction: column; justify-content: space-between; padding: 3px 2px 1px; border-right: 1px solid #d5d5d8; margin-bottom: 3px; }
.group h2 { text-align: center; color: #666; }
.tools { display: flex; }
.tool { display: flex; flex-direction: column; align-items: center; justify-content: flex-start; height: 48px; white-space: nowrap; }
.tool > svg { width: 27px; height: 27px; }
.tool .caret { margin-top: 3px; }
.tool span .caret { margin: 0 0 2px; }
.tool:disabled, .mini:disabled { color: #aaa; }
.w32 { width: 32px; }
.w38 { width: 38px; }
.w42 { width: 42px; }
.w46 { width: 46px; }
.w56 { width: 56px; }
.icon-word { font: bold 10px "Open Sans", sans-serif; fill: #111; }
.nc-code { font: 7px "Open Sans", sans-serif; fill: #aaa; }
.esc-word { font: bold 5px "Open Sans", sans-serif; fill: #fff; text-anchor: middle; }
.stack { display: flex; flex-direction: column; gap: 4px; padding: 1px 0 0 2px; }
.stack.two { gap: 9px; padding: 7px 2px 0; }
.mini { display: flex; align-items: center; gap: 1px; height: 12px; white-space: nowrap; }
.collapse { margin: auto 6px 2px auto; }

.work { display: flex; flex: 1; min-height: 0; }
.panel { display: flex; flex-direction: column; width: 190px; flex: none; padding-top: 2px; border-right: 1px solid #d4d4e4; }
.bar { display: flex; align-items: center; height: 19px; margin: 0 8px 3px 6px; }
.bar .flat { width: 18px; height: 18px; }
.bar .on { background: #fff; border: 1px solid #ccc; }
.bar .last { margin-left: auto; margin-right: -4px; }
.tree { position: relative; height: 139px; margin: 0 7px 0 5px; padding: 0 4px; background: #fff; border: 1px solid #777; border-right-color: #ddd; border-bottom-color: #ddd; }
.node { display: flex; align-items: center; gap: 3px; height: 12px; white-space: nowrap; }
.toggle { width: 5px; height: 5px; border: 1px solid #888; background: #eee; }
.child { gap: 1px; padding-left: 14px; }
.branch { width: 6px; height: 1px; background: #aaa; }
.chosen { padding: 0 3px; background: #f0f0f0; }
.star { position: absolute; right: 2px; top: 2px; width: 12px; height: 12px; }
.kinds { height: 24px; margin: 2px 20px 4px 9px; gap: 2px; border-top: 1px solid #999; }

.form { flex: 1; padding: 4px 12px; }
.fields { display: grid; grid-template-columns: 19px 44px 21px 44px 26px; align-items: center; row-gap: 2px; }
.fields input { width: 44px; height: 16px; padding: 0 2px 3px; background: #fff; border: 1px solid #aaa; border-top-color: #777; }
.wide { grid-column: 1 / -1; }
.half { grid-column: 1 / 3; }
.rest { grid-column: 3 / -1; padding-left: 8px; }
.c2 { grid-column: 2; }
.c4 { grid-column: 4; }
.axis { justify-self: end; padding-right: 8px; }
.fields .round { justify-self: end; }
.dim { color: #aaa; }
.fields input:disabled { color: #888; }
.round { width: 16px; height: 16px; border: 1px solid #5c8fc0; border-radius: 50%; background: #d9e9f8; }
.round.gray { border-color: #888; background: #ddd; }
.round svg { width: 14px; height: 14px; }
.tick { display: flex; align-items: center; gap: 4px; margin: 5px 0 3px; }
.tick input { appearance: none; width: 10px; height: 10px; border: 1px solid #5a8fc2; background: #deebf7; }
.tick.all { margin: 43px 0 5px; }
.caption { display: block; margin-bottom: 5px; }
.apply { display: grid; grid-template-columns: 107px 49px; gap: 1px; }
.list { appearance: none; height: 68px; overflow: hidden; background: #fff; border: 1px solid #999; border-right-color: #ccc; border-bottom-color: #ccc; outline: 0; }
.list option { min-height: 0; height: 11px; padding: 0 1px; }
.list option:checked { background: linear-gradient(#0a78d4, #0a78d4); color: #fff; -webkit-text-fill-color: #fff; }
.acts { display: flex; flex-direction: column; }
.push { position: relative; height: 17px; padding-bottom: 2px; background: #f0f0f0; border: 1px solid #fff; border-right-color: #666; border-bottom-color: #666; }
.push.focus { border-color: #555; outline: 1px dotted #666; outline-offset: -4px; }
.cursor { position: absolute; left: 26px; top: 4px; width: 10px; height: 14px; }
.ends { display: flex; gap: 4px; width: 154px; margin-top: 6px; }
.ends .push-right { margin-left: auto; }
.sheets { display: flex; align-items: stretch; height: 16px; }
.sheet { flex: 1; border-top: 1px solid #999; border-bottom: 1px solid #aaa; }
.sheet.current { border-top: 0; border-right: 1px solid #888; }

.view { position: relative; flex: 1; min-width: 0; background: linear-gradient(#c9cae7, #d5d6e6 35%, #e0e1ea 70%, #ebebec); }
.drawing { width: 100%; height: 100%; }
.slot { fill: none; stroke: #f000f0; stroke-width: 1.5px; }
.grip { fill: #ff00ff; }
.ring { fill: none; stroke: #93803c; stroke-width: 1px; }
.model { font: 13px "Liberation Sans", sans-serif; fill: #161650; }
.brand { position: absolute; right: 51px; bottom: 9px; display: flex; align-items: center; gap: 8px; height: 38px; padding: 0 3px 0 0; background: #f3f3f4; color: #e28583; font: 600 41px/34px "Open Sans", sans-serif; }
.brand svg { width: 48px; height: 36px; }
.brand span { padding-bottom: 4px; }

.status { display: flex; align-items: center; height: 25px; padding: 0 15px 2px 2px; background: #f0f0f0; border-bottom: 2px solid #222; }
.prompt { width: 255px; height: 21px; background: #fff; border: 1px solid #888; border-right: 0; }
.switches { display: flex; margin-right: 3px; }
.switch { display: grid; place-items: center; width: 24px; height: 21px; background: #cfe4f7; border: 1px solid #2777bd; }
.sky { color: #7aa5df; }
.violet { color: #b25bd0; }
.pink { color: #d57ae0; }
.drop { position: relative; width: 43px; height: 15px; margin-right: 2px; }
.drop select { appearance: none; width: 100%; height: 100%; padding: 0 11px 0 2px; background: #fff; border: 1px solid #999; }
.drop::after { content: ""; position: absolute; right: 1px; top: 1px; width: 10px; height: 13px; border: 1px solid #aaa; background: linear-gradient(#222, #222) 2px 4px / 5px 1px no-repeat, linear-gradient(#222, #222) 3px 5px / 3px 1px no-repeat, linear-gradient(#222, #222) 4px 6px / 1px 1px no-repeat, #eee; pointer-events: none; }
.icons { display: flex; gap: 7px; margin-left: 4px; }
.zooms { gap: 8px; margin-left: 10px; }
.icons .menu { gap: 6px; margin-right: -2px; }
.snaps { gap: 5px; margin-left: 12px; }
.coords { margin-left: auto; font: 7px/7px "DejaVu Sans", sans-serif; color: #28286c; white-space: nowrap; }
```

FILE: script.js
```js
const NS = "http://www.w3.org/2000/svg";
const centre = { x: 735, y: 398.5 };
const count = 22;

// Grip positions of one slot, relative to the array centre.
const outline = [
  [-10, -210], [-11, -204], [-9.5, -186], [-8.5, -167], [0, -159.5],
  [8.5, -167], [9.5, -186], [11, -204], [10, -210]
];
const crown = [[-5, -215], [-4, -217], [-2, -219], [0, -219], [2, -219], [4, -217], [5, -215], [-2, -216], [2, -216]];
const inner = [[0, -205], [0, -168], [-5, -167.5]];

function add(parent, name, attrs) {
  const node = document.createElementNS(NS, name);
  for (const key in attrs) node.setAttribute(key, attrs[key]);
  parent.appendChild(node);
}

const layer = document.getElementById("slots");
for (let i = 0; i < count; i++) {
  const a = i * 2 * Math.PI / count;
  const place = ([x, y]) => [
    centre.x + x * Math.cos(a) - y * Math.sin(a),
    centre.y + x * Math.sin(a) + y * Math.cos(a)
  ];
  const at = (x, y) => place([x, y]).map(v => v.toFixed(1)).join(" ");
  add(layer, "path", {
    class: "slot",
    d: `M${at(-5, -215)}L${at(-10, -210)}L${at(-11, -204)}L${at(-9.5, -186)}L${at(-8.5, -167)}` +
       `Q${at(-7, -160)} ${at(0, -159.5)}Q${at(7, -160)} ${at(8.5, -167)}` +
       `L${at(9.5, -186)}L${at(11, -204)}L${at(10, -210)}L${at(5, -215)}M${at(-8.5, -167)}L${at(0, -168)}`
  });
  for (const point of [...outline, ...crown, ...inner]) {
    const [x, y] = place(point);
    const size = crown.includes(point) ? 5 : 4;
    add(layer, "rect", { class: "grip", x: Math.round(x - size / 2), y: Math.round(y - size / 2), width: size, height: size });
  }
  const [cx, cy] = place([0, -168]);
  add(layer, "circle", { class: "ring", cx, cy, r: 4 });
}
```
